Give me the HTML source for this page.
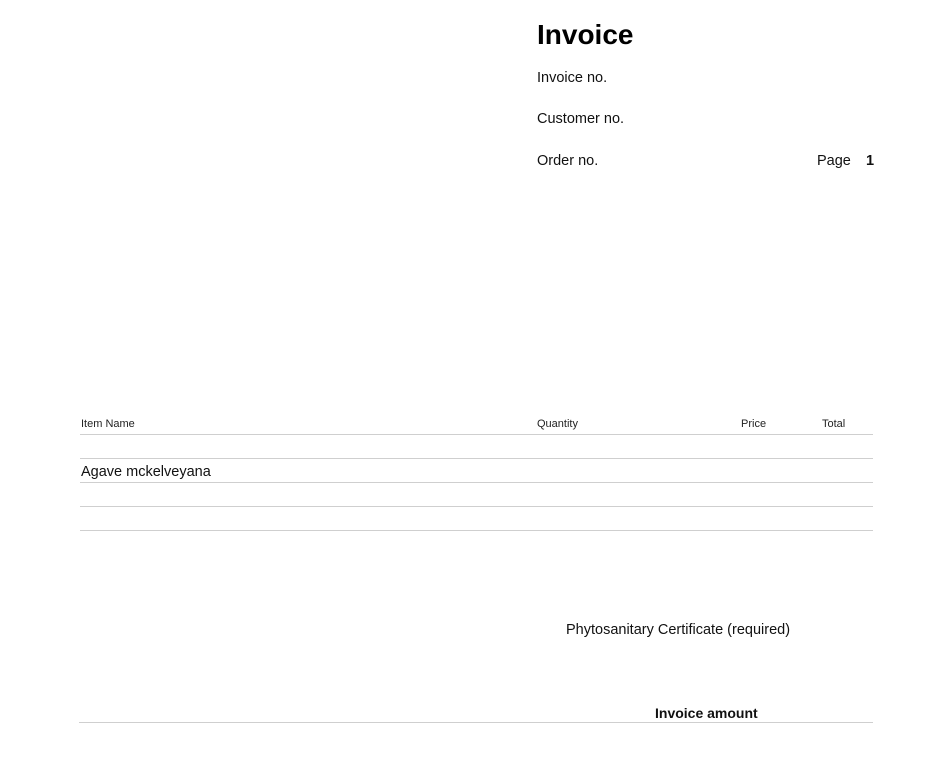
<!DOCTYPE html>
<html><head><style>
body{margin:0;width:937px;height:769px;background:#fff;position:relative;font-family:"Liberation Sans",sans-serif;color:#111;overflow:hidden}
div{position:absolute;white-space:nowrap}
.t{font-size:14.5px}
.h{font-size:11px;color:#222}
.l{height:1px;background:#cfcfcf;left:80px;width:793px}
</style></head><body>
<div style="left:537px;top:19px;font-size:28px;font-weight:bold;color:#000">Invoice</div>
<div class="t" style="left:537px;top:70px">Invoice no.</div>
<div class="t" style="left:537px;top:111px">Customer no.</div>
<div class="t" style="left:537px;top:153px">Order no.</div>
<div class="t" style="left:817px;top:153px">Page</div>
<div class="t" style="left:866px;top:153px;font-weight:bold">1</div>
<div class="h" style="left:81px;top:418px">Item Name</div>
<div class="h" style="left:537px;top:418px">Quantity</div>
<div class="h" style="left:741px;top:418px">Price</div>
<div class="h" style="left:822px;top:418px">Total</div>
<div class="l" style="top:434px"></div>
<div class="l" style="top:458px"></div>
<div class="t" style="left:81px;top:464px">Agave mckelveyana</div>
<div class="l" style="top:482px"></div>
<div class="l" style="top:506px"></div>
<div class="l" style="top:530px"></div>
<div class="t" style="left:566px;top:622px">Phytosanitary Certificate (required)</div>
<div class="t" style="left:655px;top:705px;font-weight:bold;font-size:14px">Invoice amount</div>
<div class="l" style="top:722px;left:79px;width:794px"></div>
</body></html>
